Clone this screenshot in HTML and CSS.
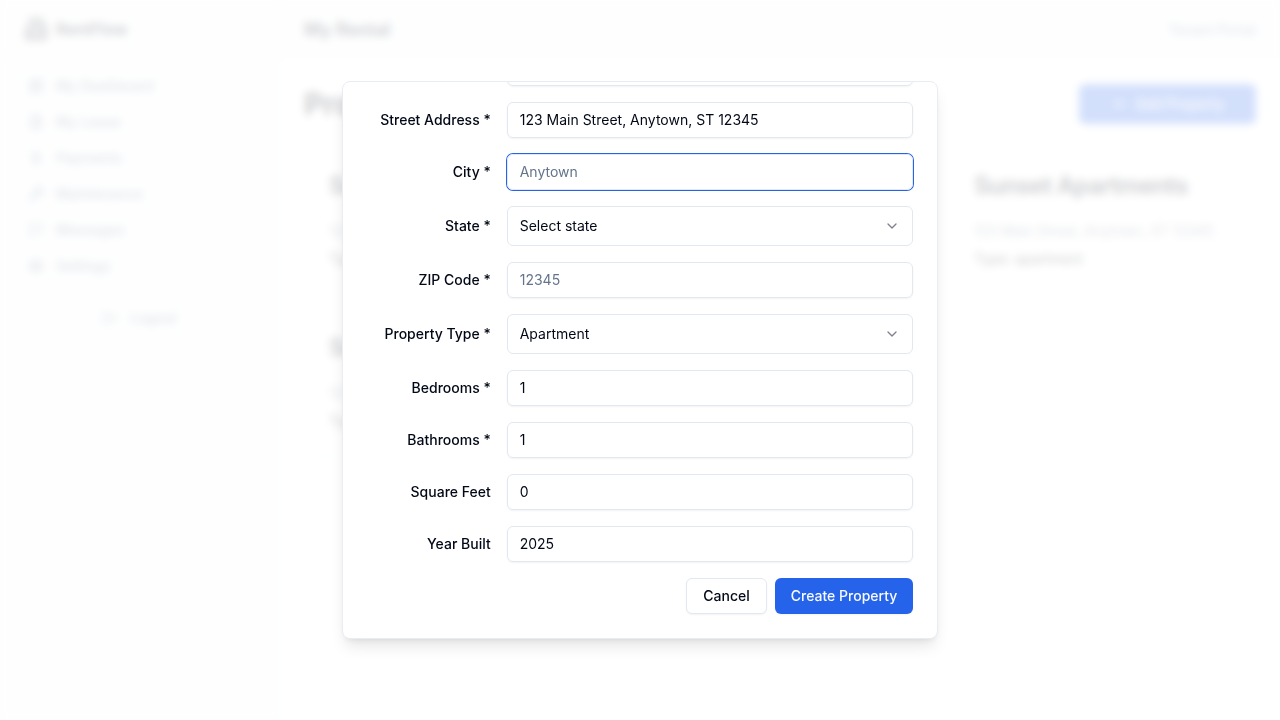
FILE: index.html
```html
<!DOCTYPE html>
<html lang="en">
<head>
<meta charset="utf-8">
<title>RentFlow</title>
<link rel="stylesheet" href="styles.css">
</head>
<body>
<div class="app">
  <aside class="sidebar">
    <div class="brand">
      <svg class="icon brand-icon" viewBox="0 0 24 24"><path d="M6 22V4a2 2 0 0 1 2-2h8a2 2 0 0 1 2 2v18Z"/><path d="M6 12H4a2 2 0 0 0-2 2v6a2 2 0 0 0 2 2h2M18 9h2a2 2 0 0 1 2 2v9a2 2 0 0 1-2 2h-2M10 6h4M10 10h4M10 14h4M10 18h4"/></svg>
      <span>RentFlow</span>
    </div>
    <nav class="nav">
      <a class="nav-item"><svg class="icon" viewBox="0 0 24 24"><rect x="3" y="3" width="7" height="9" rx="1"/><rect x="14" y="3" width="7" height="5" rx="1"/><rect x="14" y="12" width="7" height="9" rx="1"/><rect x="3" y="16" width="7" height="5" rx="1"/></svg>My Dashboard</a>
      <a class="nav-item"><svg class="icon" viewBox="0 0 24 24"><path d="M15 2H6a2 2 0 0 0-2 2v16a2 2 0 0 0 2 2h12a2 2 0 0 0 2-2V7Z"/><path d="M14 2v6h6M16 13H8M16 17H8M10 9H8"/></svg>My Lease</a>
      <a class="nav-item"><svg class="icon" viewBox="0 0 24 24"><path d="M12 2v20M17 5H9.500a3.500 3.500 0 0 0 0 7h5a3.500 3.500 0 0 1 0 7H6"/></svg>Payments</a>
      <a class="nav-item"><svg class="icon" viewBox="0 0 24 24"><path d="M14.700 6.300a1 1 0 0 0 0 1.400l1.600 1.600a1 1 0 0 0 1.400 0l3.770-3.770a6 6 0 0 1-7.940 7.940l-6.910 6.910a2.120 2.120 0 0 1-3-3l6.910-6.910a6 6 0 0 1 7.940-7.940z"/></svg>Maintenance</a>
      <a class="nav-item"><svg class="icon" viewBox="0 0 24 24"><path d="M21 15a2 2 0 0 1-2 2H7l-4 4V5a2 2 0 0 1 2-2h14a2 2 0 0 1 2 2z"/></svg>Messages</a>
      <a class="nav-item"><svg class="icon" viewBox="0 0 24 24"><circle cx="12" cy="12" r="3"/><circle cx="12" cy="12" r="8"/><path d="M12 1v3M12 20v3M1 12h3M20 12h3M4.200 4.200l2.100 2.100M17.700 17.700l2.100 2.100M4.200 19.800l2.100-2.100M17.700 6.300l2.100-2.100"/></svg>Settings</a>
    </nav>
    <div class="logout"><svg class="icon" viewBox="0 0 24 24"><path d="M9 21H5a2 2 0 0 1-2-2V5a2 2 0 0 1 2-2h4M16 17l5-5-5-5M21 12H9"/></svg>Logout</div>
  </aside>
  <div class="content">
    <header class="topbar"><span class="topbar-title">My Rental</span><span class="portal">Tenant Portal</span></header>
    <main class="main">
      <div class="page-head">
        <h1 class="page-title">Properties</h1>
        <div class="add-button"><svg class="icon" viewBox="0 0 24 24"><path d="M5 12h14M12 5v14"/></svg>Add Property</div>
      </div>
      <div class="cards">
        <section class="card"><h2 class="card-title">Sunset Apartments</h2><p class="address">123 Main Street, Anytown, ST 12345</p><p class="type">Type: apartment</p></section>
        <section class="card"><h2 class="card-title">Sunset Apartments</h2><p class="address">123 Main Street, Anytown, ST 12345</p><p class="type">Type: apartment</p></section>
        <section class="card"><h2 class="card-title">Sunset Apartments</h2><p class="address">123 Main Street, Anytown, ST 12345</p><p class="type">Type: apartment</p></section>
        <section class="card"><h2 class="card-title">Sunset Apartments</h2><p class="address">123 Main Street, Anytown, ST 12345</p><p class="type">Type: apartment</p></section>
      </div>
    </main>
  </div>
</div>
<div class="overlay">
  <form class="dialog">
    <div class="row"><span class="label"></span><div class="field"></div></div>
    <div class="row"><span class="label">Street Address *</span><div class="field">123 Main Street, Anytown, ST 12345</div></div>
    <div class="row"><span class="label">City *</span><div class="field focused placeholder">Anytown</div></div>
    <div class="row"><span class="label">State *</span><div class="field select">Select state<svg class="icon chevron" viewBox="0 0 24 24"><path d="m6 9 6 6 6-6"/></svg></div></div>
    <div class="row"><span class="label">ZIP Code *</span><div class="field placeholder">12345</div></div>
    <div class="row"><span class="label">Property Type *</span><div class="field select">Apartment<svg class="icon chevron" viewBox="0 0 24 24"><path d="m6 9 6 6 6-6"/></svg></div></div>
    <div class="row"><span class="label">Bedrooms *</span><div class="field">1</div></div>
    <div class="row"><span class="label">Bathrooms *</span><div class="field">1</div></div>
    <div class="row"><span class="label">Square Feet</span><div class="field">0</div></div>
    <div class="row"><span class="label">Year Built</span><div class="field">2025</div></div>
    <div class="actions"><button type="button" class="button outline">Cancel</button><button type="button" class="button primary">Create Property</button></div>
  </form>
</div>
</body>
</html>
```
FILE: styles.css
```css
* { box-sizing: border-box; margin: 0; }
body {
  height: 720px;
  overflow: hidden;
  font: 14px/20px Inter, "Liberation Sans", sans-serif;
  color: #020817;
  background: #fff;
}
.icon {
  width: 16px;
  height: 16px;
  flex: none;
  fill: none;
  stroke: currentColor;
  stroke-width: 2;
  stroke-linecap: round;
  stroke-linejoin: round;
}
.app { display: grid; grid-template-columns: 280px 1fr; height: 720px; }
.sidebar { background: #f9fbfd; border-right: 1px solid #eef2f7; }
.brand {
  display: flex;
  align-items: center;
  gap: 8px;
  height: 60px;
  padding: 0 24px 1px;
  border-bottom: 1px solid #eef2f7;
  font-size: 16px;
  font-weight: 600;
}
.brand-icon { width: 24px; height: 24px; }
.nav { padding: 8px 16px 0; }
.nav-item {
  display: flex;
  align-items: center;
  gap: 12px;
  height: 36px;
  padding: 0 12px;
  font-weight: 500;
  color: #64748b;
}
.logout {
  display: flex;
  align-items: center;
  justify-content: center;
  gap: 12px;
  height: 36px;
  margin-top: 16px;
  font-weight: 500;
  color: #64748b;
}
.topbar {
  display: flex;
  align-items: center;
  justify-content: space-between;
  height: 60px;
  padding: 0 24px;
  background: #f9fbfd;
  border-bottom: 1px solid #eef2f7;
}
.topbar-title { font-size: 18px; font-weight: 600; }
.portal { color: #64748b; }
.main { padding: 24px; }
.page-head {
  display: flex;
  align-items: center;
  justify-content: space-between;
  height: 40px;
  margin-bottom: 24px;
}
.page-title { font-size: 30px; line-height: 36px; font-weight: 700; }
.add-button {
  display: flex;
  align-items: center;
  gap: 8px;
  height: 40px;
  padding: 0 32px;
  border-radius: 6px;
  background: #2563eb;
  color: #f8fafc;
  font-weight: 500;
}
.cards { display: grid; grid-template-columns: repeat(3, 1fr); gap: 16px; }
.card {
  height: 146px;
  padding: 24px;
  border: 1px solid #e2e8f0;
  border-radius: 8px;
  box-shadow: 0 1px 2px rgb(0 0 0 / 5%);
  white-space: nowrap;
}
.card-title { margin-bottom: 22px; font-size: 24px; line-height: 26px; font-weight: 600; letter-spacing: -0.6px; }
.address { color: #64748b; }
.type { margin-top: 8px; }
.overlay {
  position: fixed;
  inset: 0;
  display: flex;
  align-items: center;
  justify-content: center;
  background: rgb(255 255 255 / 80%);
  backdrop-filter: blur(4px);
}
.dialog {
  display: flex;
  flex-direction: column;
  justify-content: flex-end;
  gap: 16px;
  width: 596.600px;
  height: 558px;
  padding: 24px;
  overflow: hidden;
  border: 1px solid #e8edf3;
  border-radius: 8px;
  background: #fff;
  box-shadow: 0 10px 15px -3px rgb(0 0 0 / 10%), 0 4px 6px -4px rgb(0 0 0 / 10%);
}
.row {
  display: grid;
  grid-template-columns: 124px 1fr;
  gap: 16px;
  align-items: center;
  flex: none;
}
.label { text-align: right; font-weight: 500; white-space: nowrap; }
.field {
  display: flex;
  align-items: center;
  height: 36px;
  padding: 0 12px;
  border: 1px solid #e2e8f0;
  border-radius: 6px;
  box-shadow: 0 1px 2px rgb(0 0 0 / 5%);
}
.focused { box-shadow: 0 0 0 1px #2563eb; }
.placeholder { color: #64748b; }
.select { height: 40px; justify-content: space-between; box-shadow: none; }
.chevron { opacity: 0.5; }
.actions { display: flex; justify-content: flex-end; gap: 8px; flex: none; }
.button {
  height: 36px;
  padding: 0 16px;
  border: 0;
  border-radius: 6px;
  font: inherit;
  font-weight: 500;
  color: inherit;
  box-shadow: 0 1px 2px rgb(0 0 0 / 5%);
}
.outline { border: 1px solid #e2e8f0; background: #fff; }
.primary { background: #2563eb; color: #f8fafc; }
```
